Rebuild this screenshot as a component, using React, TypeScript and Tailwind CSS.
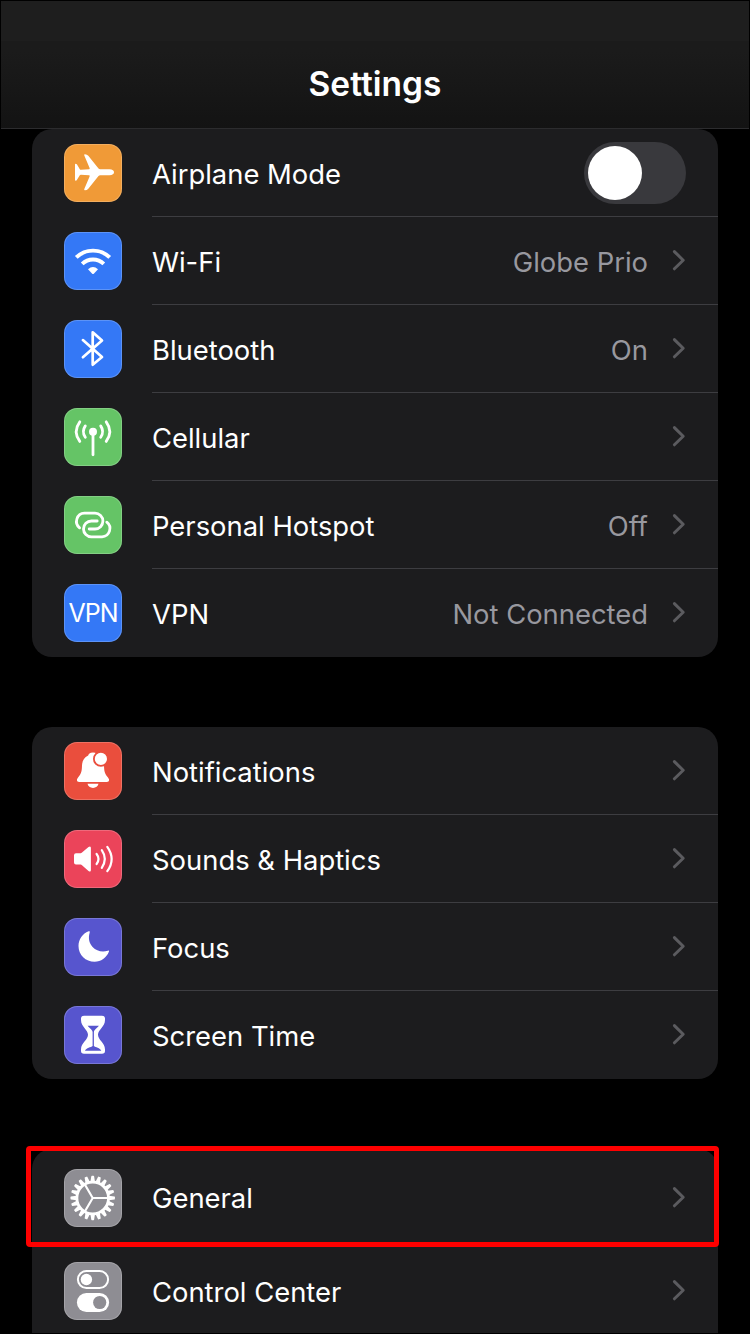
import type { ReactNode } from "react";

type Item = {
  label: string;
  color: string;
  icon: ReactNode;
  value?: string;
  toggle?: boolean;
};

// All glyphs are drawn on the same 58x58 grid as the coloured tile
function Glyph({ children }: { children: ReactNode }) {
  return (
    <svg
      viewBox="0 0 58 58"
      className="w-[58px] h-[58px]"
      fill="none"
      stroke="none"
      strokeLinecap="round"
      strokeLinejoin="round"
    >
      {children}
    </svg>
  );
}

function AirplaneIcon() {
  return (
    <Glyph>
      <path
        fill="#fff"
        d="M45.5 25.3 C48.5 25.3 50 26.7 50 28.2 C50 29.8 48.5 31.2 45.5 31.2 H36.2 Q35.2 31.2 34.5 32 L24.3 44.7 Q23 46.3 21 46.3 Q19.8 46.3 20.3 45 L25.6 32.5 Q26 31.3 25 31.2 L17 30.7 Q16.2 30.6 15.8 31.2 L13 35.8 Q12.5 36.7 11.7 36.7 Q11 36.7 11 35.8 V20.6 Q11 19.7 11.7 19.7 Q12.5 19.7 13 20.5 L15.8 25.2 Q16.2 25.8 17 25.8 L25 25.3 Q26 25.2 25.6 24 L20.3 11.5 Q19.8 10.2 21 10.2 Q23 10.2 24.3 11.8 L34.5 24.5 Q35.2 25.3 36.2 25.3 Z"
      />
    </Glyph>
  );
}

function WifiIcon() {
  return (
    <Glyph>
      <g stroke="#fff" strokeWidth="3.9" strokeLinecap="butt">
        <path d="M12.3 25.4 A24 24 0 0 1 45.7 25.4" />
        <path d="M18.2 31.9 A15.5 15.5 0 0 1 39.8 31.9" />
      </g>
      <path
        fill="#fff"
        d="M24 37.2 Q29 33 34 37.2 L29.8 41.7 Q29 42.5 28.2 41.7 Z"
      />
    </Glyph>
  );
}

function BluetoothIcon() {
  return (
    <Glyph>
      <path
        stroke="#fff"
        strokeWidth="2.7"
        d="M18.9 20.1 L38 37 L28.7 44.7 V12.3 L38 20.6 L18.9 37.2"
      />
    </Glyph>
  );
}

function CellularIcon() {
  return (
    <Glyph>
      <circle cx="29" cy="23.8" r="4" fill="#fff" />
      <g stroke="#fff" strokeWidth="2.8">
        <path d="M29 24 V46.8" />
        <path d="M21.3 17.9 Q17.4 23.6 21.3 29.3 M36.7 17.9 Q40.6 23.6 36.7 29.3" />
        <path d="M15.8 13.8 Q8.6 23.6 15.8 33.4 M42.2 13.8 Q49.4 23.6 42.2 33.4" />
      </g>
    </Glyph>
  );
}

function HotspotIcon() {
  return (
    <Glyph>
      <g stroke="#fff" strokeWidth="2.8">
        <path d="M15.6 31.8 A8.2 8.2 0 0 1 20.4 17.2 H31 A7.9 7.9 0 0 1 31 33 H25.2" />
        <path d="M42.8 26.2 A8.2 8.2 0 0 1 38 40.8 H27.4 A7.9 7.9 0 0 1 27.4 25 H33.2" />
      </g>
    </Glyph>
  );
}

function VpnIcon() {
  return (
    <span className="text-[25px] leading-[58px] tracking-[-1px] text-white">
      VPN
    </span>
  );
}

function BellIcon() {
  return (
    <Glyph>
      <path
        fill="#fff"
        d="M29 10.4 C25.8 10.4 24.4 12 24.2 13.6 C20 15.6 18.2 19 18 23.5 C17.8 29 17.4 31.5 14.4 35 C13.4 36.3 12.9 37.2 12.9 38 C12.9 39.3 13.8 40 15.2 40 H42.8 C44.2 40 45.1 39.3 45.1 38 C45.1 37.2 44.6 36.3 43.6 35 C40.6 31.5 40.2 29 40 23.5 C39.8 19 38 15.6 33.8 13.6 C33.6 12 32.2 10.4 29 10.4 Z"
      />
      <path fill="#fff" d="M23.5 41.8 H34.5 C34 44.4 31.8 45.9 29 45.9 C26.2 45.9 24 44.4 23.5 41.8 Z" />
      <circle cx="36.9" cy="16.9" r="7" fill="#fff" stroke="#ea4e3d" strokeWidth="1.8" />
    </Glyph>
  );
}

function SpeakerIcon() {
  return (
    <Glyph>
      <path
        fill="#fff"
        d="M12 23.2 H16.6 Q17.4 23.2 18 22.6 L24.5 17 Q26.9 15.4 26.9 18 V40 Q26.9 42.6 24.5 41 L18 35.2 Q17.4 34.6 16.6 34.6 H12 Q10 34.6 10 32.6 V25.2 Q10 23.2 12 23.2 Z"
      />
      <g stroke="#fff" strokeWidth="2.2">
        <path d="M32.6 24 Q36.4 29 32.6 34" />
        <path d="M37.8 20.2 Q43.8 29 37.8 37.8" />
        <path d="M43.3 16.8 Q52 29 43.3 41.2" />
      </g>
    </Glyph>
  );
}

function MoonIcon() {
  return (
    <Glyph>
      <path
        fill="#fff"
        d="M24.6 13.3 Q26.2 12.7 25.7 14.4 C23.9 20.5 25.4 25.4 28.6 28.9 C32.4 32.9 38 34.6 43.8 32.7 Q45.6 32.3 44.9 33.8 C42.4 39.8 37 43.8 30.6 43.8 C21.6 43.8 14.5 36.9 14.5 28 C14.5 21.4 18.6 15.6 24.6 13.3 Z"
      />
    </Glyph>
  );
}

function HourglassIcon() {
  return (
    <Glyph>
      <path
        fill="#fff"
        d="M20 9.7 H38 Q41 9.7 41 12.5 V14 C41 21 34 23.5 34 28.8 C34 34 41 36.8 41 43.5 V45 Q41 47.8 38 47.8 H20 Q17 47.8 17 45 V43.5 C17 36.8 24 34 24 28.8 C24 23.5 17 21 17 14 V12.5 Q17 9.7 20 9.7 Z"
      />
      <path
        fill="#5755ce"
        d="M23.6 19.8 H34.9 C33.4 22.2 30.2 23.4 29.9 26 V40 C31.5 41.4 36 41.7 37.3 44.7 H21 C22.2 41.7 27 41.4 28.6 40 V26 C28.3 23.4 25.1 22.2 23.6 19.8 Z"
      />
    </Glyph>
  );
}

const teeth = Array.from({ length: 20 }, (_, i) => i * 18);

function GearIcon() {
  return (
    <Glyph>
      <circle cx="28.7" cy="29" r="15.8" stroke="#fff" strokeWidth="2.8" />
      {teeth.map((angle) => (
        <path
          key={angle}
          fill="#fff"
          transform={`rotate(${angle} 28.7 29)`}
          d="M26.4 13 L27.3 7.2 Q27.4 6.8 27.9 6.8 H29.5 Q30 6.8 30.1 7.2 L31 13 Z"
        />
      ))}
      <path
        stroke="#fff"
        strokeWidth="2.1"
        d="M28.7 29 H44 M28.7 29 L20.9 15.6 M28.7 29 L20.9 42.4"
      />
    </Glyph>
  );
}

function SwitchesIcon() {
  return (
    <Glyph>
      <rect x="13.9" y="9" width="30.2" height="17" rx="8.5" stroke="#fff" strokeWidth="2" />
      <circle cx="22.4" cy="17.5" r="5.7" fill="#fff" />
      <rect x="12.9" y="31" width="32.2" height="19" rx="9.5" fill="#fff" />
      <circle cx="35.7" cy="40.5" r="6.6" fill="#8e8d93" />
    </Glyph>
  );
}

function Chevron() {
  return (
    <svg viewBox="0 0 14 22" className="w-[14px] h-[22px] ml-6 mb-px" fill="none">
      <path
        d="M2.4 2.6 L11.2 11.2 L2.4 19.8"
        stroke="#5b5b5f"
        strokeWidth="3"
        strokeLinecap="round"
        strokeLinejoin="round"
      />
    </svg>
  );
}

function Toggle() {
  return (
    <div className="w-[102px] h-[62px] p-1 rounded-full bg-[#39393d]">
      <div className="w-[54px] h-[54px] rounded-full bg-white" />
    </div>
  );
}

function Row({
  item,
  last,
  labelOffset = "pt-0.5",
}: {
  item: Item;
  last?: boolean;
  labelOffset?: string;
}) {
  return (
    <div className="flex h-[88px] pl-8">
      <div
        className={`w-[58px] h-[58px] mt-[15px] shrink-0 rounded-[13px] flex items-center justify-center overflow-hidden shadow-[inset_0_0_0_1px_rgba(255,255,255,0.2)] ${item.color}`}
      >
        {item.icon}
      </div>
      <div
        className={`ml-[30px] flex-1 flex items-center pr-8 border-b ${
          last ? "border-transparent" : "border-[#3d3d41]"
        }`}
      >
        <span className={`flex-1 text-white ${labelOffset}`}>{item.label}</span>
        {item.value && <span className="pt-0.5 text-[#98989f]">{item.value}</span>}
        {item.toggle ? <Toggle /> : <Chevron />}
      </div>
    </div>
  );
}

function Group({ items }: { items: Item[] }) {
  return (
    <div className="mx-8 rounded-[20px] bg-[#1c1c1e]">
      {items.map((item, i) => (
        <Row key={item.label} item={item} last={i === items.length - 1} />
      ))}
    </div>
  );
}

const connectivity: Item[] = [
  { label: "Airplane Mode", color: "bg-[#f09a37]", icon: <AirplaneIcon />, toggle: true },
  { label: "Wi-Fi", color: "bg-[#3478f6]", icon: <WifiIcon />, value: "Globe Prio" },
  { label: "Bluetooth", color: "bg-[#3478f6]", icon: <BluetoothIcon />, value: "On" },
  { label: "Cellular", color: "bg-[#65c466]", icon: <CellularIcon /> },
  { label: "Personal Hotspot", color: "bg-[#65c466]", icon: <HotspotIcon />, value: "Off" },
  { label: "VPN", color: "bg-[#3478f6]", icon: <VpnIcon />, value: "Not Connected" },
];

const alerts: Item[] = [
  { label: "Notifications", color: "bg-[#ea4e3d]", icon: <BellIcon /> },
  { label: "Sounds & Haptics", color: "bg-[#eb445a]", icon: <SpeakerIcon /> },
  { label: "Focus", color: "bg-[#5755ce]", icon: <MoonIcon /> },
  { label: "Screen Time", color: "bg-[#5755ce]", icon: <HourglassIcon /> },
];

const general: Item = { label: "General", color: "bg-[#8e8d93]", icon: <GearIcon /> };
const controlCenter: Item = {
  label: "Control Center",
  color: "bg-[#8e8d93]",
  icon: <SwitchesIcon />,
};

export default function App() {
  return (
    <div className="w-[750px] h-[1334px] overflow-hidden bg-black border border-black font-[Inter,'Liberation_Sans',sans-serif] text-[27.4px] leading-9">
      <div className="-mx-px">
        <header className="mx-px h-32 border-b border-[#2c2c2e] bg-linear-to-b from-[#1b1b1b] from-40% to-[#131313]">
          <div className="h-10 bg-[#1e1e1e]" />
          <h1 className="pt-[19px] text-center text-[33.5px] leading-[48px] font-semibold text-white">
            Settings
          </h1>
        </header>

        <Group items={connectivity} />
        <div className="h-[70px]" />
        <Group items={alerts} />

        {/* General row is outlined, the group runs off the bottom edge */}
        <div className="relative mt-[70px] mx-8 rounded-t-[20px] bg-[#1c1c1e] h-[184px]">
          <div className="h-[98px] pt-[5px]">
            <Row item={general} last labelOffset="pt-0" />
          </div>
          <Row item={controlCenter} last />
          <div className="absolute -left-1.5 -top-[3px] w-[693px] h-[101px] rounded border-5 border-[#fe0000]" />
        </div>
      </div>
    </div>
  );
}
